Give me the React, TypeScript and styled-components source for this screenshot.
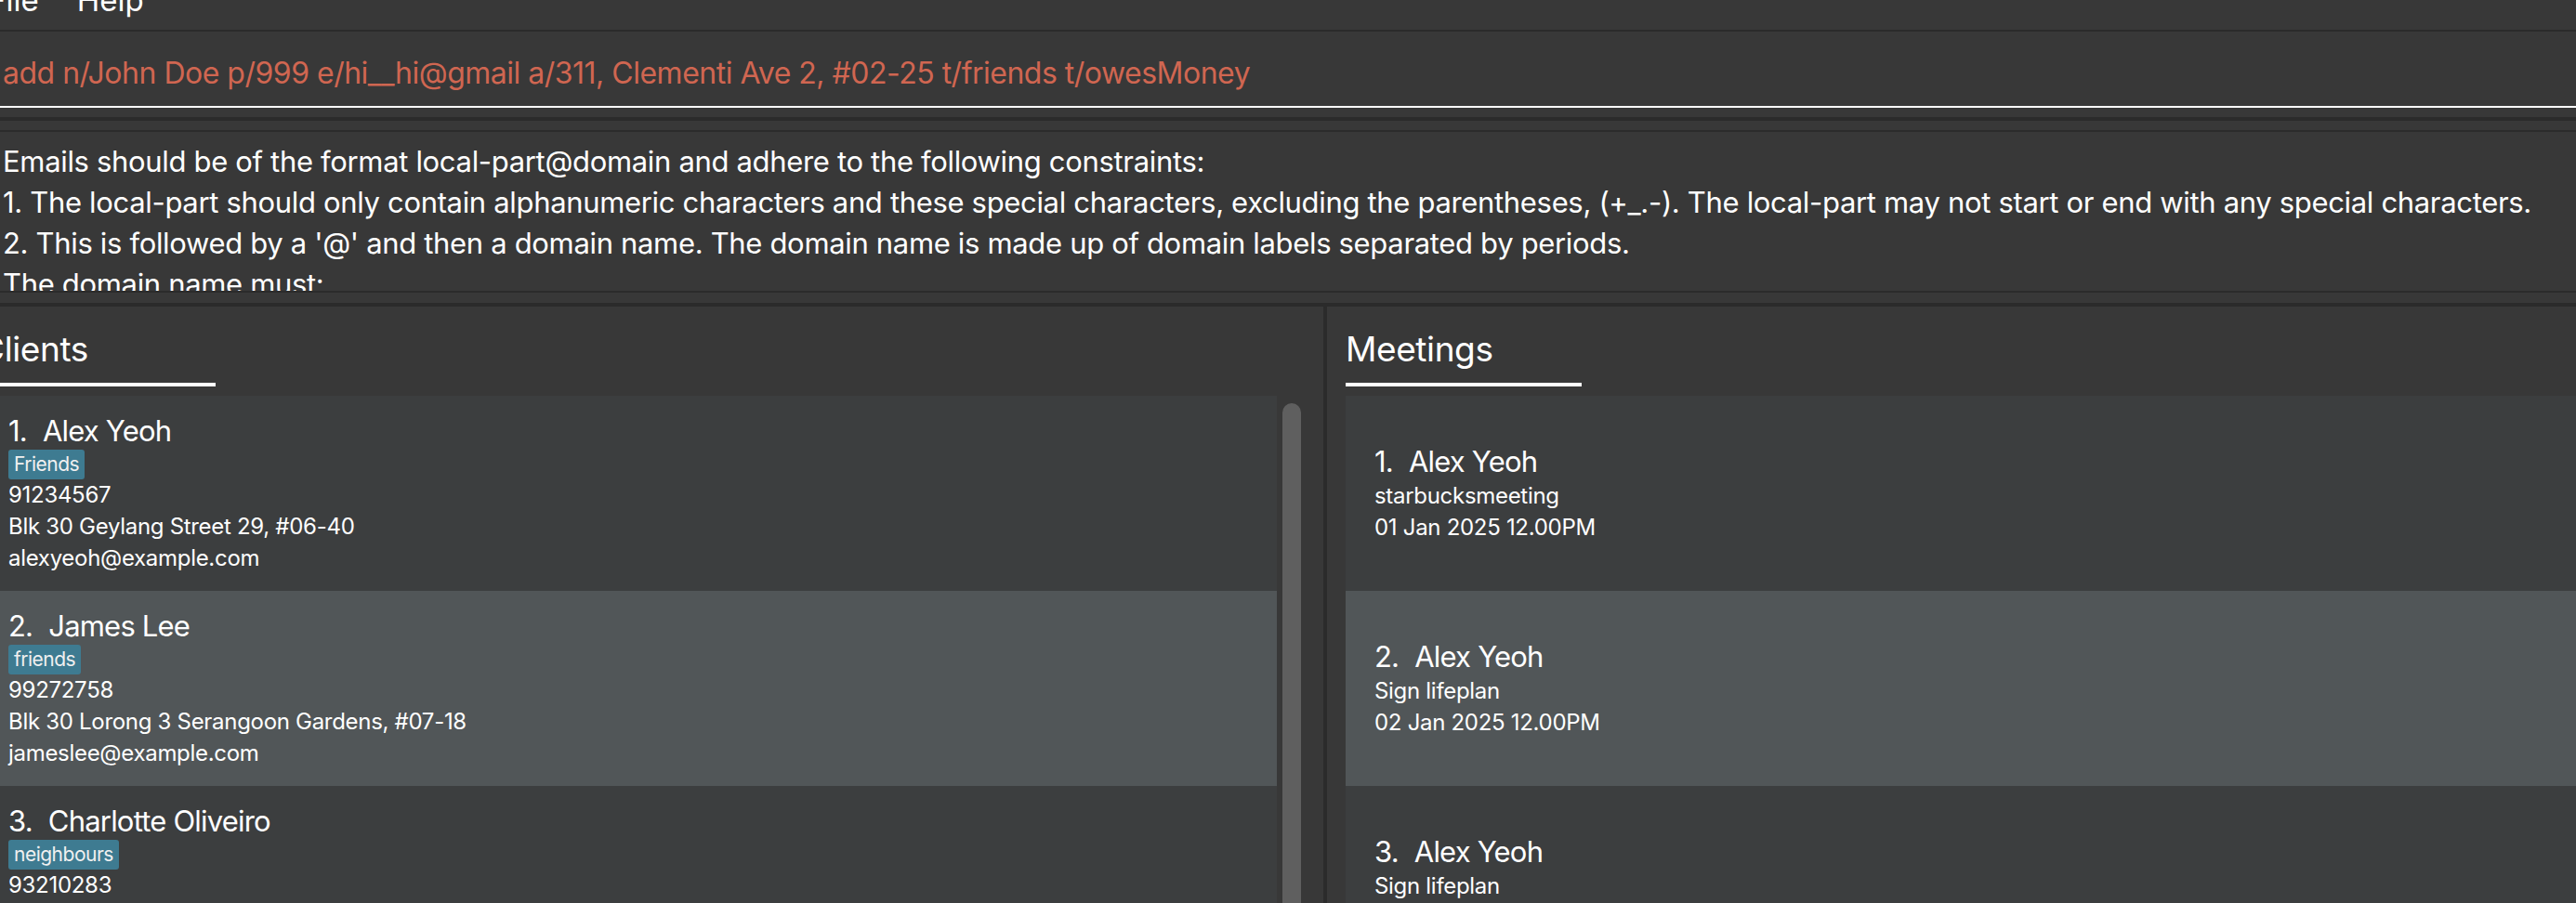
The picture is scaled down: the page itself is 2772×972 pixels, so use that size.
import React from 'react';
import styled, { createGlobalStyle } from 'styled-components';

const GlobalStyle = createGlobalStyle`
    html, body {
        margin: 0;
        padding: 0;
        background: #383838;
        overflow: hidden;
    }
    body {
        font-family: Inter, 'Liberation Sans', sans-serif;
        color: #fff;
    }
`;

const Window = styled.div`
    width: calc(100vw + 42px);
    height: 972px;
    margin-left: -42px;
    display: flex;
    flex-direction: column;
    background: #383838;
    overflow: hidden;
`;

const MenuBar = styled.div`
    height: 32px;
    flex: 0 0 32px;
    display: flex;
    align-items: flex-start;
    gap: 41px;
    padding-left: 29px;
    border-bottom: 2px solid #2b2b2b;
    overflow: hidden;
`;

const MenuItem = styled.span`
    font-size: 33px;
    line-height: 33px;
    margin-top: -16px;
    color: #fff;
`;

const CommandBox = styled.div`
    flex: 0 0 82px;
    height: 82px;
    box-sizing: border-box;
    padding: 25px 0 0 45px;
    border-bottom: 2px solid #fff;
    overflow: hidden;
`;

const CommandText = styled.div`
    font-size: 32px;
    line-height: 40px;
    color: #d06651;
    white-space: nowrap;
    letter-spacing: -0.5px;
`;

const Divider = styled.div`
    flex: 0 0 4px;
    height: 4px;
    background: #2b2b2b;
    margin-top: ${p => p.$gap}px;
`;

const ResultPane = styled.div`
    flex: 0 0 175px;
    height: 175px;
    box-sizing: border-box;
    margin-top: 10px;
    border-top: 2px solid #2b2b2b;
    border-bottom: 2px solid #2b2b2b;
    padding: 10px 0 0 45px;
    overflow: hidden;
`;

const ResultLine = styled.div`
    font-size: 31px;
    line-height: 44px;
    white-space: nowrap;
    letter-spacing: -0.33px;
`;

const Panels = styled.div`
    flex: 1;
    display: flex;
    min-height: 0;
`;

const Panel = styled.div`
    display: flex;
    flex-direction: column;
    box-sizing: border-box;
    padding: 23px ${p => p.$right}px 0 20px;
    ${p => p.$width ? `flex: 0 0 ${p.$width}px;` : 'flex: 1;'}
    min-width: 0;
    overflow: hidden;
`;

const SplitLine = styled.div`
    flex: 0 0 4px;
    background: #2b2b2b;
`;

const PanelTitle = styled.div`
    font-size: 37px;
    line-height: 46px;
    letter-spacing: -0.4px;
`;

const TitleBar = styled.div`
    width: 254px;
    height: 4px;
    margin-top: 13px;
    background: #fff;
`;

const ListArea = styled.div`
    margin-top: 10px;
    display: flex;
    gap: 6px;
    flex: 1;
    min-height: 0;
`;

const Cards = styled.div`
    flex: 1;
    display: flex;
    flex-direction: column;
    min-width: 0;
`;

const ScrollTrack = styled.div`
    flex: 0 0 20px;
    padding-top: 8px;
`;

const Thumb = styled.div`
    width: 20px;
    height: 700px;
    border-radius: 10px;
    background: #5f5f5f;
`;

const Card = styled.div`
    flex: 0 0 210px;
    height: 210px;
    box-sizing: border-box;
    padding-left: 31px;
    display: flex;
    flex-direction: column;
    justify-content: center;
    align-items: flex-start;
    background: ${p => (p.$odd ? '#515658' : '#3c3e3f')};
`;

const Name = styled.div`
    font-size: 31px;
    line-height: 40px;
    letter-spacing: -0.8px;
    white-space: nowrap;
`;

const Index = styled.span`
    margin-right: 17px;
`;

const Tag = styled.span`
    display: inline-block;
    height: 32px;
    line-height: 32px;
    padding: 0 6px;
    font-size: 21px;
    letter-spacing: -0.5px;
    background: #3e7b91;
    border-radius: 3px;
    color: #f0f0f0;
`;

const Detail = styled.div`
    font-size: 24px;
    line-height: 34px;
    letter-spacing: -0.3px;
    white-space: nowrap;
`;

const clients = [
    { name: 'Alex Yeoh', tag: 'Friends', phone: '91234567', address: 'Blk 30 Geylang Street 29, #06-40', email: 'alexyeoh@example.com' },
    { name: 'James Lee', tag: 'friends', phone: '99272758', address: 'Blk 30 Lorong 3 Serangoon Gardens, #07-18', email: 'jameslee@example.com' },
    { name: 'Charlotte Oliveiro', tag: 'neighbours', phone: '93210283', address: 'Blk 11 Ang Mo Kio Street 74, #11-04', email: 'charlotte@example.com' },
];

const meetings = [
    { name: 'Alex Yeoh', what: 'starbucksmeeting', when: '01 Jan 2025 12.00PM' },
    { name: 'Alex Yeoh', what: 'Sign lifeplan', when: '02 Jan 2025 12.00PM' },
    { name: 'Alex Yeoh', what: 'Sign lifeplan', when: '03 Jan 2025 12.00PM' },
];

const result = [
    'Emails should be of the format local-part@domain and adhere to the following constraints:',
    '1. The local-part should only contain alphanumeric characters and these special characters, excluding the parentheses, (+_.-). The local-part may not start or end with any special characters.',
    "2. This is followed by a '@' and then a domain name. The domain name is made up of domain labels separated by periods.",
    'The domain name must:',
    '    - end with a domain label at least 2 characters long',
];

export default function App() {
    return (
        <>
            <GlobalStyle />
            <Window>
                <MenuBar>
                    <MenuItem>File</MenuItem>
                    <MenuItem>Help</MenuItem>
                </MenuBar>
                <CommandBox>
                    <CommandText>add n/John Doe p/999 e/hi__hi@gmail a/311, Clementi Ave 2, #02-25 t/friends t/owesMoney</CommandText>
                </CommandBox>
                <Divider $gap={10} />
                <ResultPane>
                    {result.map((line, i) => <ResultLine key={i}>{line}</ResultLine>)}
                </ResultPane>
                <Divider $gap={11} />
                <Panels>
                    <Panel $width={1466} $right={24}>
                        <PanelTitle>Clients</PanelTitle>
                        <TitleBar />
                        <ListArea>
                            <Cards>
                                {clients.map((c, i) => (
                                    <Card key={i} $odd={i % 2 === 1}>
                                        <Name><Index>{i + 1}.</Index>{c.name}</Name>
                                        <Tag>{c.tag}</Tag>
                                        <Detail>{c.phone}</Detail>
                                        <Detail>{c.address}</Detail>
                                        <Detail>{c.email}</Detail>
                                    </Card>
                                ))}
                            </Cards>
                            <ScrollTrack><Thumb /></ScrollTrack>
                        </ListArea>
                    </Panel>
                    <SplitLine />
                    <Panel $right={0}>
                        <PanelTitle>Meetings</PanelTitle>
                        <TitleBar />
                        <ListArea>
                            <Cards>
                                {meetings.map((m, i) => (
                                    <Card key={i} $odd={i % 2 === 1}>
                                        <Name><Index>{i + 1}.</Index>{m.name}</Name>
                                        <Detail>{m.what}</Detail>
                                        <Detail>{m.when}</Detail>
                                    </Card>
                                ))}
                            </Cards>
                        </ListArea>
                    </Panel>
                </Panels>
            </Window>
        </>
    );
}
